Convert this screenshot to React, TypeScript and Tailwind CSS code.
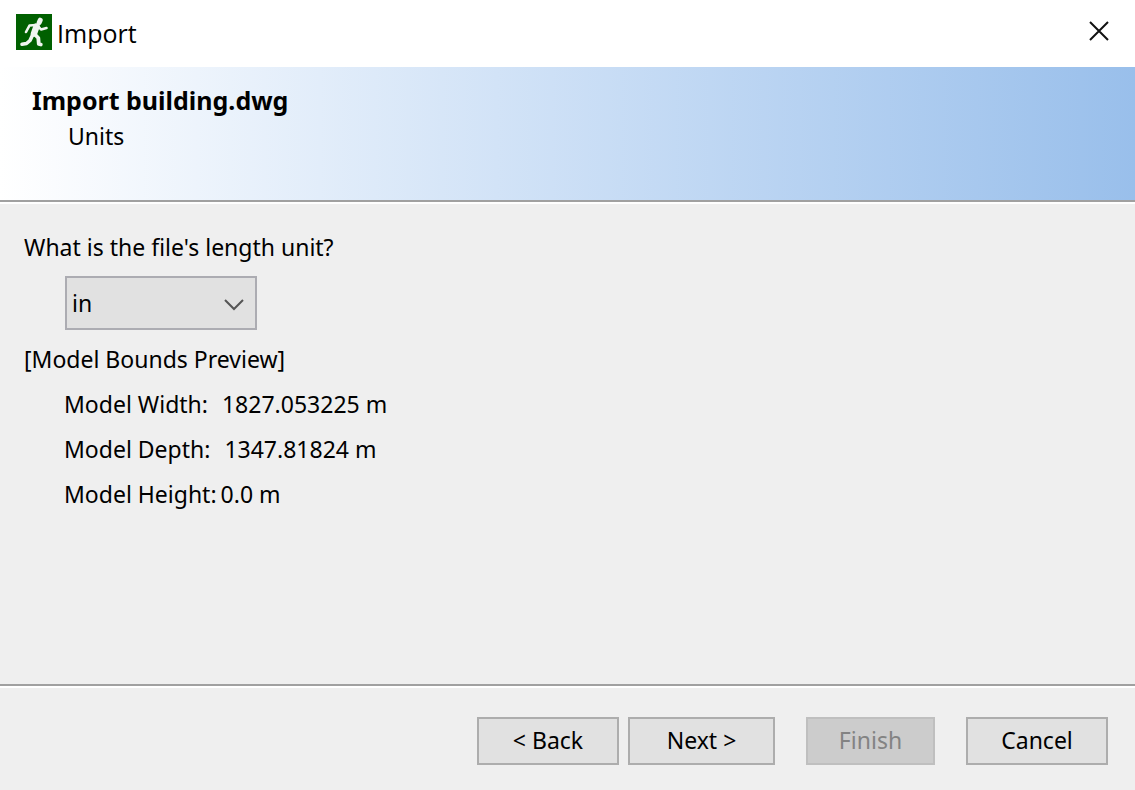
const bounds = [
  { label: "Model Width:", value: "1827.053225 m", gap: "pl-3.5" },
  { label: "Model Depth:", value: "1347.81824 m", gap: "pl-3.5" },
  { label: "Model Height:", value: "0.0 m", gap: "pl-1" },
];

const buttonClass =
  "h-12 pb-0.5 border-2 border-[#adadad] bg-[#e1e1e1] text-black hover:bg-[#e5f1fb] disabled:border-[#bfbfbf] disabled:bg-[#cccccc] disabled:text-[#838383]";

function RunnerIcon() {
  return (
    <svg className="size-9" viewBox="0 0 36 36" aria-hidden="true">
      <rect width="36" height="36" fill="#006000" />
      <g
        fill="none"
        stroke="#f0f5f0"
        strokeLinecap="round"
        strokeLinejoin="round"
      >
        <path d="M24.2 6.200l-1 2.300" strokeWidth="5" />
        <path d="M20.500 12.500l-2.500 7" strokeWidth="6.500" />
        <path d="M20 11l-6.500 0.500-3.500 6.500" strokeWidth="2.600" />
        <path d="M22 12l3 3.500 5.500-1.500" strokeWidth="2.600" />
        <path d="M17 20l-3 6.500-3.500 3-4.500 0.800" strokeWidth="3.600" />
        <path d="M18.500 20l3.800 4 0.500 6 2 0.500" strokeWidth="3.800" />
      </g>
    </svg>
  );
}

function App() {
  return (
    <div className="min-h-screen flex flex-col bg-[#efefef] text-black text-[23px] font-['Noto_Sans',sans-serif]">
      <div className="h-[67px] pl-4 pr-6 flex items-center justify-between bg-white">
        <div className="flex items-center gap-[5px] pb-1">
          <RunnerIcon />
          <span className="pt-0.5 text-[25px] leading-9 font-['Open_Sans',sans-serif]">
            Import
          </span>
        </div>
        <button className="size-6 mb-1" type="button" aria-label="Close">
          <svg className="size-6" viewBox="0 0 24 24" aria-hidden="true">
            <path
              d="M3 2l18 18M21 2L3 20"
              fill="none"
              stroke="#111"
              strokeWidth="2"
            />
          </svg>
        </button>
      </div>

      <header className="h-[135px] px-8 pt-[15px] bg-linear-to-r from-white to-[#99bfeb] border-b-2 border-[#a0a0a0]">
        <h1 className="text-[25px] leading-9 font-bold">Import building.dwg</h1>
        <p className="pl-9 leading-9">Units</p>
      </header>

      <main className="grow border-t-2 border-white px-6 pt-6">
        <label className="block leading-[38px]" htmlFor="unit">
          What is the file's length unit?
        </label>
        <div className="relative ml-[41px] mt-2.5 w-48">
          <select
            id="unit"
            className="appearance-none block w-full h-[54px] pl-[5px] border-2 border-[#acacb2] bg-[#e1e1e1]"
          >
            <option>in</option>
            <option>ft</option>
            <option>cm</option>
            <option>m</option>
          </select>
          <svg
            className="absolute right-3 top-4 size-6 pointer-events-none"
            viewBox="0 0 24 24"
            aria-hidden="true"
          >
            <path
              d="M4 8l9 9 9-9"
              fill="none"
              stroke="#555"
              strokeWidth="2"
            />
          </svg>
        </div>
        <h2 className="mt-[7px] leading-[45px]">[Model Bounds Preview]</h2>
        <dl className="pl-10">
          {bounds.map(({ label, value, gap }) => (
            <div className="flex leading-[45px]" key={label}>
              <dt>{label}</dt>
              <dd className={gap}>{value}</dd>
            </div>
          ))}
        </dl>
      </main>

      <footer className="border-t-2 border-[#a0a0a0]">
        <div className="border-t-2 border-white pt-[29px] pb-[25px] pr-[27px] flex justify-end">
          <button className={`${buttonClass} w-[142px]`} type="button">
            &lt; Back
          </button>
          <button className={`${buttonClass} w-[147px] ml-[9px]`} type="button">
            Next &gt;
          </button>
          <button
            className={`${buttonClass} w-[129px] ml-[31px]`}
            type="button"
            disabled
          >
            Finish
          </button>
          <button className={`${buttonClass} w-[142px] ml-[31px]`} type="button">
            Cancel
          </button>
        </div>
      </footer>
    </div>
  );
}

export default App;
